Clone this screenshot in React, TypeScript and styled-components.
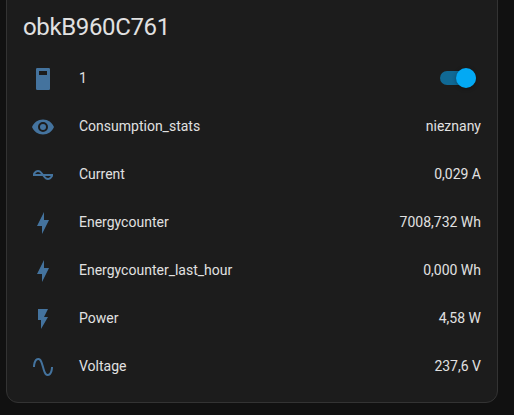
import React from 'react';
import styled, { createGlobalStyle } from 'styled-components';

const GlobalStyle = createGlobalStyle`
  html, body { margin: 0; background: #111111; }
  body { height: 415px; overflow: hidden; font-family: Roboto, sans-serif; }
`;

const Card = styled.section`
  box-sizing: border-box;
  width: 492px;
  height: 415px;
  margin: -12px 0 0 6px;
  padding: 12px 16px 0;
  color: #e1e1e1;
  background: #1c1c1c;
  border: 1px solid #333333;
  border-radius: 12px;
`;

const Title = styled.h1`
  margin: 0;
  height: 53px;
  font-size: 24px;
  font-weight: 400;
  line-height: 53px;
  letter-spacing: -0.36px;
`;

const Row = styled.div`
  display: flex;
  align-items: center;
  height: 48px;
`;

const IconSlot = styled.div`
  display: flex;
  flex: none;
  justify-content: center;
  width: 40px;
  padding-top: 2px;
  color: #44739e;
`;

const Icon = styled.svg`
  display: block;
  width: 24px;
  height: 24px;
  fill: currentColor;
`;

const Name = styled.span`
  flex: 1;
  margin-left: 16px;
  font-size: 14px;
  line-height: 20px;
`;

const Value = styled.span`
  font-size: 14px;
  line-height: 20px;
  text-align: right;
`;

const Switch = styled.button`
  display: flex;
  align-items: center;
  width: 36px;
  height: 14px;
  margin: 0 5px 0 0;
  padding: 0;
  border: 0;
  border-radius: 7px;
  background: #106995;
`;

const Thumb = styled.span<{ $on: boolean }>`
  flex: none;
  width: 20px;
  height: 20px;
  margin-left: ${({ $on }) => ($on ? '16px' : '0')};
  border-radius: 50%;
  background: #03a9f4;
  box-shadow: 0 1px 4px rgba(0, 0, 0, 0.3);
`;

const icons = {
  toggle: 'M6.2 1H17.8A1.2 1.2 0 0 1 19 2.2V21.8A1.2 1.2 0 0 1 17.8 23H6.2A1.2 1.2 0 0 1 5 21.8V2.2A1.2 1.2 0 0 1 6.2 1M8 4V8H16V4H8Z',
  eye: 'M12,9A3,3 0 0,0 9,12A3,3 0 0,0 12,15A3,3 0 0,0 15,12A3,3 0 0,0 12,9M12,17A5,5 0 0,1 7,12A5,5 0 0,1 12,7A5,5 0 0,1 17,12A5,5 0 0,1 12,17M12,4.5C7,4.5 2.73,7.61 1,12C2.73,16.39 7,19.5 12,19.5C17,19.5 21.27,16.39 23,12C21.27,7.61 17,4.5 12,4.5Z',
  current: 'M12.43 11C12.28 10.84 10 7 7 7S2.32 10.18 2 11V13H11.57C11.72 13.16 14 17 17 17S21.68 13.82 22 13V11H12.43M7 9C8.17 9 9.18 9.85 10 11H4.31C4.78 10.17 5.54 9 7 9M17 15C15.83 15 14.83 14.15 14 13H19.69C19.22 13.83 18.46 15 17 15Z',
  bolt: 'M11 15H6L13 1V9H18L11 23V15Z',
  flash: 'M7,2V13H10V22L17,10H13L17,2H7Z',
  sine: 'M16.5,21C13.5,21 12.31,16.76 11.05,12.28C10.14,9.04 9,5 7.5,5C4.11,5 4,11.93 4,12H2C2,11.63 2.06,3 7.5,3C10.5,3 11.71,7.25 12.97,11.74C13.83,14.8 15,19 16.5,19C19.94,19 20.03,12.07 20.03,12H22.03C22.03,12.37 21.97,21 16.5,21Z',
};

type Entity = { icon: keyof typeof icons; name: string; value?: string };

const entities: Entity[] = [
  { icon: 'toggle', name: '1' },
  { icon: 'eye', name: 'Consumption_stats', value: 'nieznany' },
  { icon: 'current', name: 'Current', value: '0,029 A' },
  { icon: 'bolt', name: 'Energycounter', value: '7008,732 Wh' },
  { icon: 'bolt', name: 'Energycounter_last_hour', value: '0,000 Wh' },
  { icon: 'flash', name: 'Power', value: '4,58 W' },
  { icon: 'sine', name: 'Voltage', value: '237,6 V' },
];

function EntityRow({ icon, name, value }: Entity) {
  const [on, setOn] = React.useState(true);
  return (
    <Row>
      <IconSlot>
        <Icon viewBox="0 0 24 24" aria-hidden="true">
          <path d={icons[icon]} fillRule="evenodd" />
        </Icon>
      </IconSlot>
      <Name>{name}</Name>
      {value !== undefined ? (
        <Value>{value}</Value>
      ) : (
        <Switch role="switch" aria-checked={on} onClick={() => setOn(!on)}>
          <Thumb $on={on} />
        </Switch>
      )}
    </Row>
  );
}

export default function App() {
  return (
    <>
      <GlobalStyle />
      <Card>
        <Title>obkB960C761</Title>
        {entities.map((entity) => (
          <EntityRow key={entity.name} {...entity} />
        ))}
      </Card>
    </>
  );
}
